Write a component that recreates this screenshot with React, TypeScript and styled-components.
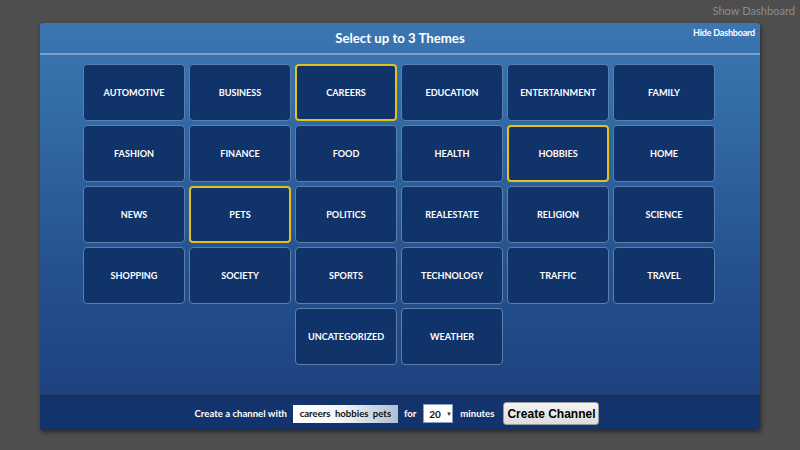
import React from "react";
import styled, { createGlobalStyle } from "styled-components";

const Global = createGlobalStyle`
  html, body { margin: 0; padding: 0; }
  body { background: #4e4e4e; font-family: Lato, "Open Sans", sans-serif; width: 800px; height: 450px; overflow: hidden; }
`;

const Page = styled.div`
  width: 800px;
  height: 450px;
  display: flex;
  flex-direction: column;
  align-items: center;
`;

const TopBar = styled.div`
  width: 100%;
  height: 23px;
  display: flex;
  justify-content: flex-end;
  align-items: center;
  box-sizing: border-box;
  padding-right: 5px;
  padding-bottom: 2px;
`;

const ShowLink = styled.span`
  color: #8d8d8d;
  font-size: 11.1px;
`;

const Panel = styled.div`
  width: 720px;
  height: 407px;
  border-radius: 3px;
  display: flex;
  flex-direction: column;
  overflow: hidden;
  box-shadow: 1px 2px 4px rgba(0, 0, 0, 0.5);
  background: linear-gradient(#3b76b2 0px, #3570ab 60px, #25508e 250px, #1d4280 372px);
`;

const Header = styled.div`
  height: 30px;
  position: relative;
  display: flex;
  align-items: center;
  justify-content: center;
  border-bottom: 2px solid #7aa0cc;
`;

const Title = styled.h1`
  margin: 0;
  color: #ffffff;
  font-size: 13.2px;
  font-weight: 700;
`;

const HideLink = styled.span`
  position: absolute;
  right: 5px;
  top: 4px;
  color: #ffffff;
  font-size: 9px;
  font-weight: 700;
  letter-spacing: -0.2px;
`;

const Body = styled.div`
  flex: 1;
  display: flex;
  justify-content: center;
  padding-top: 9px;
  padding-right: 2px;
  border-bottom: 2px solid #1a2d55;
`;

const Grid = styled.div`
  display: grid;
  grid-template-columns: repeat(6, 102px);
  grid-auto-rows: 57px;
  gap: 4px 4px;
  align-content: start;
`;

const Tile = styled.div<{ $selected?: boolean; $col?: number }>`
  box-sizing: border-box;
  background: #10336a;
  border: ${(p) => (p.$selected ? "2px solid #e0c21a" : "1px solid #5c7fa9")};
  border-radius: 4px;
  display: flex;
  align-items: center;
  justify-content: center;
  color: #ffffff;
  font-size: 9.1px;
  font-weight: 700;
  text-transform: uppercase;
  grid-column: ${(p) => (p.$col ? `${p.$col}` : "auto")};
`;

const Footer = styled.div`
  height: 33px;
  background: #12336b;
  display: flex;
  align-items: center;
  justify-content: center;
  color: #ffffff;
  font-size: 9.6px;
  font-weight: 700;
  padding-right: 6px;
`;

const Label = styled.span<{ $ml?: number; $mr?: number }>`
  margin-left: ${(p) => p.$ml ?? 0}px;
  margin-right: ${(p) => p.$mr ?? 0}px;
`;

const ThemeBox = styled.div`
  width: 105px;
  height: 18px;
  box-sizing: border-box;
  background: linear-gradient(90deg, #ffffff 0%, #f4f7fa 45%, #aebfcf 100%);
  color: #111;
  font-size: 9.6px;
  font-weight: 700;
  display: flex;
  align-items: center;
  justify-content: center;
  word-spacing: 2px;
`;

const Select = styled.div`
  width: 30px;
  height: 19px;
  box-sizing: border-box;
  background: #ffffff;
  border: 1px solid #8aa0c0;
  color: #111;
  font-size: 10px;
  font-weight: 700;
  display: flex;
  align-items: center;
  padding-left: 5px;
  gap: 5px;
`;

const Arrow = styled.span`
  font-size: 6px;
  color: #333;
`;

const Button = styled.button`
  height: 23px;
  width: 96px;
  box-sizing: border-box;
  background: linear-gradient(#f4f4f4, #dcdcdc);
  border: 1px solid #9a9a9a;
  border-radius: 3px;
  font-family: "Liberation Sans", Arial, sans-serif;
  font-weight: 700;
  font-size: 12px;
  color: #000;
  padding: 0;
`;

const themes = [
  "Automotive", "Business", "Careers", "Education", "Entertainment", "Family",
  "Fashion", "Finance", "Food", "Health", "Hobbies", "Home",
  "News", "Pets", "Politics", "Realestate", "Religion", "Science",
  "Shopping", "Society", "Sports", "Technology", "Traffic", "Travel",
  "Uncategorized", "Weather",
];
const selected = new Set(["Careers", "Hobbies", "Pets"]);

export default function App() {
  return (
    <Page>
      <Global />
      <TopBar>
        <ShowLink>Show Dashboard</ShowLink>
      </TopBar>
      <Panel>
        <Header>
          <Title>Select up to 3 Themes</Title>
          <HideLink>Hide Dashboard</HideLink>
        </Header>
        <Body>
          <Grid>
            {themes.map((t) => (
              <Tile key={t} $selected={selected.has(t)} $col={t === "Uncategorized" ? 3 : undefined}>
                {t}
              </Tile>
            ))}
          </Grid>
        </Body>
        <Footer>
          <Label $mr={6}>Create a channel with</Label>
          <ThemeBox>careers hobbies pets</ThemeBox>
          <Label $ml={6} $mr={7}>for</Label>
          <Select>
            20<Arrow>▼</Arrow>
          </Select>
          <Label $ml={7} $mr={9}>minutes</Label>
          <Button>Create Channel</Button>
        </Footer>
      </Panel>
    </Page>
  );
}
